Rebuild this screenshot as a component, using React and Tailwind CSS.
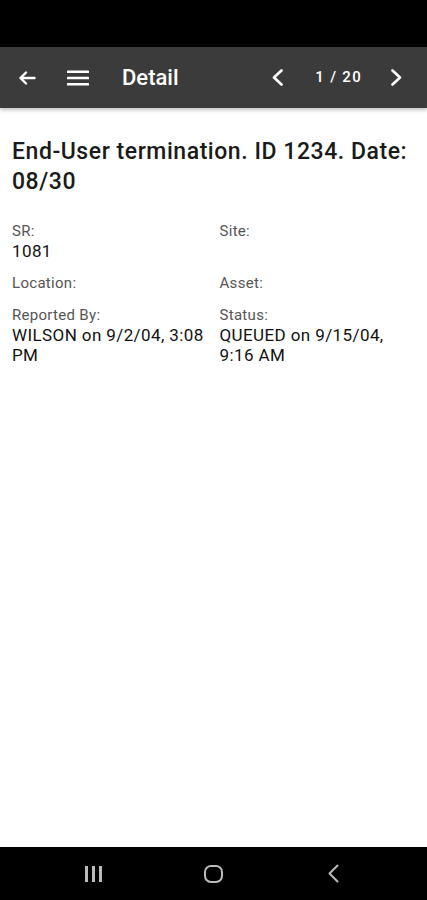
const fields = [
  { label: "SR:", value: "1081" },
  { label: "Site:", value: "" },
  { label: "Location:", value: "" },
  { label: "Asset:", value: "" },
  { label: "Reported By:", value: "WILSON on 9/2/04, 3:08 PM" },
  { label: "Status:", value: "QUEUED on 9/15/04, 9:16 AM" },
];

function Field({ label, value }) {
  return (
    <div className="flex flex-col">
      <span className="text-[15px] leading-[20px] tracking-[0.3px] text-[#555]">{label}</span>
      {value && (
        <span className="text-[17px] leading-[20px] tracking-[0.4px] text-[#111]">{value}</span>
      )}
    </div>
  );
}

const Chevron = ({ dir }) => (
  <svg width="13" height="17" viewBox="0 0 13 17" fill="none" stroke="currentColor" strokeWidth="2.6" strokeLinecap="round" strokeLinejoin="round">
    {dir === "left" ? <polyline points="10.5,1.5 3,8.5 10.5,15.5" /> : <polyline points="2.5,1.5 10,8.5 2.5,15.5" />}
  </svg>
);

export default function App() {
  return (
    <div className="w-[427px] h-[900px] flex flex-col bg-white font-['Roboto',sans-serif]">
      {/* status bar */}
      <div className="h-[47px] bg-black" />

      {/* header */}
      <div className="h-[61px] bg-[#3b3b3b] flex items-center text-white shadow-[0_2px_4px_rgba(0,0,0,0.25)] relative z-10 pl-[18px] pr-[24px]">
        <svg width="18" height="14" viewBox="0 0 18 14" fill="none" stroke="currentColor" strokeWidth="2.4" strokeLinecap="round" strokeLinejoin="round">
          <path d="M16.5 7H2.5M8 1.5L2.5 7L8 12.5" />
        </svg>
        <svg width="22" height="16" viewBox="0 0 22 16" className="ml-[31px]" fill="currentColor">
          <rect x="0" y="0.5" width="22" height="2.6" rx="0.6" />
          <rect x="0" y="6.7" width="22" height="2.6" rx="0.6" />
          <rect x="0" y="12.9" width="22" height="2.6" rx="0.6" />
        </svg>
        <span className="ml-[33px] text-[22px] font-medium leading-none">Detail</span>
        <div className="ml-auto flex items-center">
          <Chevron dir="left" />
          <span className="ml-[31px] text-[15px] font-medium tracking-[1.3px] leading-none">1 / 20</span>
          <span className="ml-[28px] flex">
            <Chevron dir="right" />
          </span>
        </div>
      </div>

      {/* content */}
      <div className="flex-1 px-3 pt-[29px]">
        <h1 className="text-[23px] leading-[30px] font-medium tracking-[0.55px] text-[#1a1a1a]">
          End-User termination. ID 1234. Date: 08/30
        </h1>
        <div className="mt-[24px] grid grid-cols-2 gap-x-[12px] gap-y-[12px]">
          {fields.map((f) => (
            <Field key={f.label} {...f} />
          ))}
        </div>
      </div>

      {/* android nav bar */}
      <div className="h-[53px] bg-black flex items-center pl-[85px] text-[#bbb]">
        <div className="flex gap-[4px] h-[16px]">
          <span className="w-[3px] bg-[#bbb]" />
          <span className="w-[3px] bg-[#bbb]" />
          <span className="w-[3px] bg-[#bbb]" />
        </div>
        <div className="ml-[102px] w-[19px] h-[18px] border-2 border-[#bbb] rounded-[7px]" />
        <svg width="11" height="19" viewBox="0 0 11 19" className="ml-[105px]" fill="none" stroke="#bbb" strokeWidth="2" strokeLinecap="round" strokeLinejoin="round">
          <polyline points="9.5,1.5 1.5,9.5 9.5,17.5" />
        </svg>
      </div>
    </div>
  );
}
